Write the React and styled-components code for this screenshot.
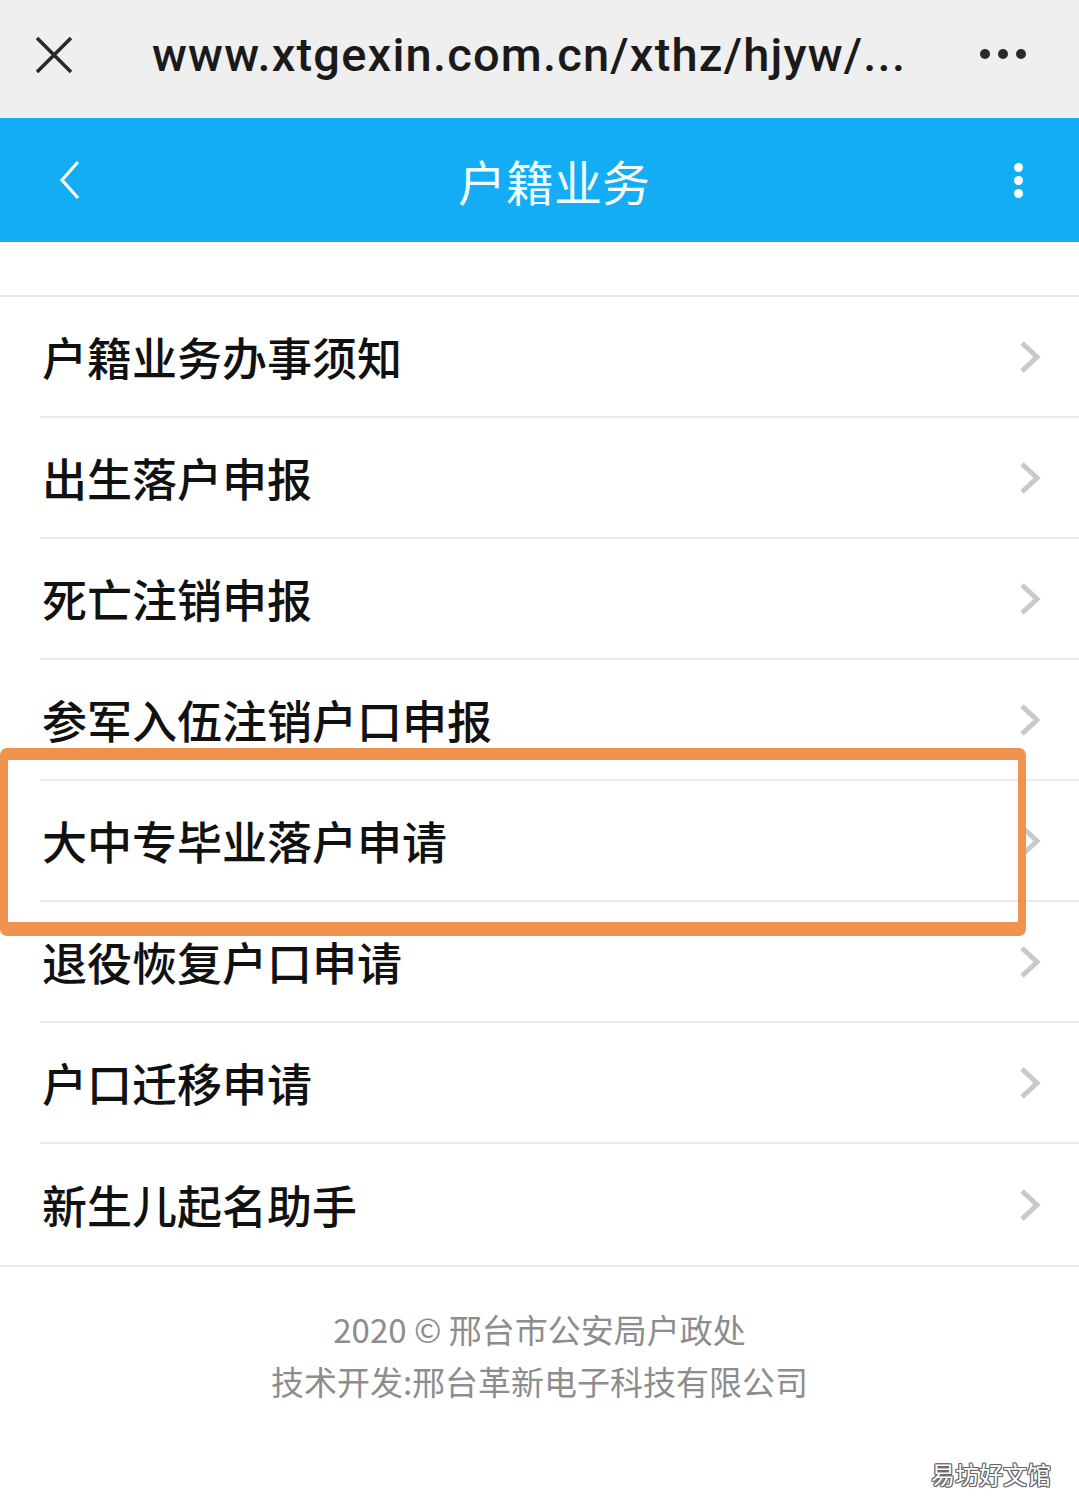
import React from "react";
import styled, { createGlobalStyle } from "styled-components";

const items = [
  "户籍业务办事须知",
  "出生落户申报",
  "死亡注销申报",
  "参军入伍注销户口申报",
  "大中专毕业落户申请",
  "退役恢复户口申请",
  "户口迁移申请",
  "新生儿起名助手",
];

export default function App() {
  return (
    <Page>
      <GlobalStyle />
      <BrowserBar>
        <IconBtn>
          <svg width="40" height="40" viewBox="0 0 40 40">
            <path d="M3 3 L37 37 M37 3 L3 37" stroke="#2a2a2a" strokeWidth="3.6" fill="none" />
          </svg>
        </IconBtn>
        <Url>www.xtgexin.com.cn/xthz/hjyw/...</Url>
        <Dots>
          <Dot />
          <Dot />
          <Dot />
        </Dots>
      </BrowserBar>
      <Header>
        <HeaderIcon>
          <svg width="24" height="40" viewBox="0 0 24 40">
            <polyline points="20,2 4,20 20,38" stroke="#fff" strokeWidth="3.2" fill="none" />
          </svg>
        </HeaderIcon>
        <Title>户籍业务</Title>
        <Kebab>
          <KDot />
          <KDot />
          <KDot />
        </Kebab>
      </Header>
      <Spacer />
      <List>
        {items.map((text, i) => (
          <Row key={text} last={i === items.length - 1}>
            <RowText>{text}</RowText>
            <svg width="22" height="34" viewBox="0 0 22 34">
              <polyline points="3,3 18,17 3,31" stroke="#c9c9c9" strokeWidth="5" fill="none" />
            </svg>
          </Row>
        ))}
        <Highlight />
      </List>
      <Footer>
        <FootLine>2020 © 邢台市公安局户政处</FootLine>
        <FootLine>技术开发:邢台革新电子科技有限公司</FootLine>
      </Footer>
      <Watermark>易坊好文馆</Watermark>
    </Page>
  );
}

const GlobalStyle = createGlobalStyle`
  html, body {
    margin: 0;
    padding: 0;
    background: #ffffff;
  }
  * { box-sizing: border-box; }
`;

const Page = styled.div`
  position: relative;
  width: 1079px;
  height: 1509px;
  overflow: hidden;
  background: #ffffff;
  font-family: "Noto Sans CJK SC", "Noto Sans", sans-serif;
`;

const BrowserBar = styled.div`
  height: 118px;
  background: #efefef;
  display: flex;
  align-items: center;
  padding: 0 0 0 34px;
`;

const IconBtn = styled.div`
  width: 40px;
  height: 40px;
  display: flex;
  margin-top: -8px;
`;

const Url = styled.div`
  margin-left: 78px;
  width: 800px;
  font-family: Roboto, "Liberation Sans", sans-serif;
  font-weight: 500;
  font-size: 47px;
  letter-spacing: 1.2px;
  color: #1a1a1a;
  white-space: nowrap;
  margin-top: -10px;
`;

const Dots = styled.div`
  margin-left: 28px;
  display: flex;
  gap: 8px;
  margin-top: -10px;
`;

const Dot = styled.span`
  width: 10px;
  height: 10px;
  border-radius: 50%;
  background: #2a2a2a;
`;

const Header = styled.div`
  height: 124px;
  background: #12adf5;
  display: flex;
  align-items: center;
  justify-content: space-between;
  padding: 0 56px 0 58px;
`;

const HeaderIcon = styled.div`
  width: 24px;
  height: 40px;
  display: flex;
`;

const Title = styled.div`
  font-size: 48px;
  color: #f4fbff;
  margin-left: 12px;
  letter-spacing: 0;
`;

const Kebab = styled.div`
  display: flex;
  flex-direction: column;
  gap: 4px;
`;

const KDot = styled.span`
  width: 9px;
  height: 9px;
  border-radius: 50%;
  background: #ffffff;
`;

const Spacer = styled.div`
  height: 55px;
  border-bottom: 2px solid #e6e6e6;
`;

const List = styled.div`
  position: relative;
  border-bottom: 2px solid #e6e6e6;
`;

const Row = styled.div`
  height: 121px;
  margin-left: 40px;
  padding: 0 38px 0 2px;
  display: flex;
  align-items: center;
  justify-content: space-between;
  border-bottom: ${(p) => (p.last ? "none" : "2px solid #ebebeb")};
`;

const RowText = styled.div`
  font-size: 45px;
  font-weight: 500;
  color: #111111;
`;

const Highlight = styled.div`
  position: absolute;
  left: 0;
  top: 451px;
  width: 1026px;
  height: 188px;
  border-style: solid;
  border-color: #f0934f;
  border-width: 12px 8px 14px 8px;
  border-radius: 7px;
  pointer-events: none;
`;

const Footer = styled.div`
  padding-top: 40px;
  display: flex;
  flex-direction: column;
  align-items: center;
  gap: 8px;
`;

const FootLine = styled.div`
  font-size: 33px;
  line-height: 44px;
  color: #8d8d8d;
`;

const Watermark = styled.div`
  position: absolute;
  right: 28px;
  bottom: 18px;
  font-size: 24px;
  color: #ffffff;
  text-shadow: 1px 0 0 #666, -1px 0 0 #666, 0 1px 0 #666, 0 -1px 0 #666,
    1px 1px 0 #666, -1px -1px 0 #666, 1px -1px 0 #666, -1px 1px 0 #666;
`;
